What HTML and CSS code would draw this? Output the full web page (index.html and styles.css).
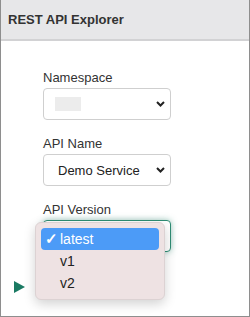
FILE: index.html
```html
<!DOCTYPE html>
<html lang="en">
<head>
	<meta charset="UTF-8">
	<title>REST API Explorer</title>
	<link rel="stylesheet" href="styles.css">
</head>
<body>
	<div class="panel">
		<div class="header">
			<h1>REST API Explorer</h1>
		</div>

		<div class="form">
			<div class="field">
				<label>Namespace</label>
				<div class="select">
					<span class="placeholder"></span>
					<svg class="chevron" width="9" height="6" viewBox="0 0 9 6"><path d="M1 1l3.5 3.5L8 1"/></svg>
				</div>
			</div>
			<div class="field">
				<label>API Name</label>
				<div class="select">
					<span class="value">Demo Service</span>
					<svg class="chevron" width="9" height="6" viewBox="0 0 9 6"><path d="M1 1l3.5 3.5L8 1"/></svg>
				</div>
			</div>
			<div class="field">
				<label>API Version</label>
				<div class="select focused">
					<svg class="chevron" width="9" height="6" viewBox="0 0 9 6"><path d="M1 1l3.5 3.5L8 1"/></svg>
				</div>
			</div>
		</div>

		<div class="run">
			<svg width="11" height="12" viewBox="0 0 11 12"><path d="M0 0L11 6L0 12Z" fill="#1b7a63"/></svg>
		</div>

		<ul class="menu">
			<li class="selected"><span class="check">&#10003;</span>latest</li>
			<li>v1</li>
			<li>v2</li>
		</ul>
	</div>
</body>
</html>
```

FILE: styles.css
```css
body{
	margin: 0px;
	font-family: "Liberation Sans", Arial, sans-serif;
	color: #333;
}
.panel{
	position: relative;
	width: 250px;
	height: 317px;
	box-sizing: border-box;
	border: 1px solid #8e8e8e;
	border-top: none;
	overflow: hidden;
}
.header{
	height: 41px;
	box-sizing: border-box;
	padding: 12px 7px 0px;
	background-color: #e7e7e9;
	border-bottom: 2px solid #d2d2d4;
}
h1{
	margin: 0px;
	font-size: 13px;
	line-height: 15px;
	font-weight: bold;
}
.form{
	padding: 29px 0px 0px 42px;
}
.field{
	margin-bottom: 16px;
}
.field label{
	display: block;
	font-size: 13px;
	line-height: 15px;
	margin-bottom: 3px;
}
.select{
	display: flex;
	align-items: center;
	width: 128px;
	height: 32px;
	box-sizing: border-box;
	padding: 0px 5px 0px 11px;
	border: 1px solid #cfcfcf;
	border-radius: 4px;
	background-color: #fff;
}
.select.focused{
	border-color: #2f8c74;
	box-shadow: 0px 0px 6px rgba(47, 140, 116, 0.5);
}
.placeholder{
	width: 26px;
	height: 14px;
	background-color: #ececec;
}
.value{
	padding-left: 3px;
	font-size: 13px;
	color: #222;
}
.chevron{
	margin-left: auto;
	fill: none;
	stroke: #222;
	stroke-width: 2;
}
.run{
	padding: 13px 0px 0px 13px;
	line-height: 0;
}
.menu{
	position: absolute;
	left: 34px;
	top: 222px;
	width: 130px;
	margin: 0px;
	padding: 5px;
	box-sizing: border-box;
	list-style: none;
	background-color: #eee2e3;
	border: 1px solid #dcd2d3;
	border-radius: 6px;
	box-shadow: 0px 4px 12px rgba(0, 0, 0, 0.18);
}
.menu li{
	height: 22px;
	line-height: 22px;
	padding-left: 19px;
	font-size: 14px;
	color: #222;
	border-radius: 4px;
	position: relative;
}
.menu li.selected{
	background-color: #4c9bf7;
	color: #fff;
}
.check{
	position: absolute;
	left: 4px;
	font-size: 15px;
	font-weight: bold;
}
```
